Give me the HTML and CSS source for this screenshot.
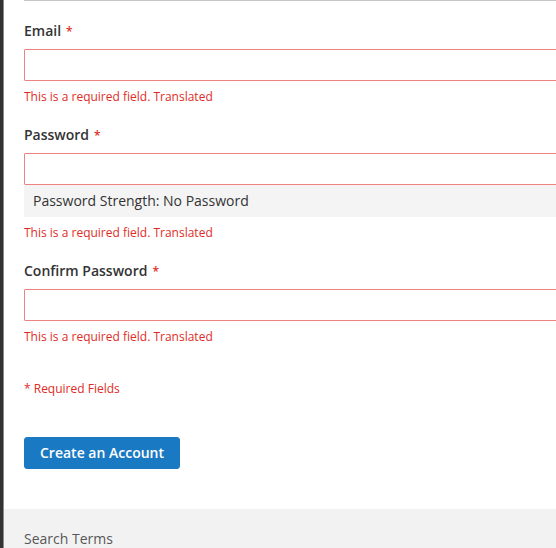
FILE: index.html
```html
<!DOCTYPE html>
<html lang="en">
<head>
<meta charset="utf-8">
<title>Create Account</title>
<link rel="stylesheet" href="styles.css">
</head>
<body>
<div class="page">
  <main class="main">
    <form class="form">
      <fieldset class="fieldset">
        <div class="field">
          <label class="label required">Email</label>
          <input class="input" type="email">
          <div class="error">This is a required field. Translated</div>
        </div>
        <div class="field">
          <label class="label required">Password</label>
          <input class="input" type="password">
          <div class="strength">Password Strength: No Password</div>
          <div class="error">This is a required field. Translated</div>
        </div>
        <div class="field">
          <label class="label required">Confirm Password</label>
          <input class="input" type="password">
          <div class="error">This is a required field. Translated</div>
        </div>
        <div class="note">* Required Fields</div>
      </fieldset>
      <div class="actions">
        <button class="btn" type="button">Create an Account</button>
      </div>
    </form>
  </main>
  <footer class="footer">
    <a class="footer-link">Search Terms</a>
  </footer>
</div>
</body>
</html>
```

FILE: styles.css
```css
html, body {
  margin: 0;
  padding: 0;
  height: 100%;
  overflow: hidden;
  background: #ffffff;
}
body {
  font-family: "Open Sans", "Liberation Sans", sans-serif;
  font-size: 14px;
  line-height: 20px;
  color: #333333;
  border-left: 3px solid #333333;
}
.page {
  border-left: 1px solid #8c8c8c;
  min-height: 100%;
  display: flex;
  flex-direction: column;
}
.main {
  padding: 0 0 0 20px;
}
.form {
  width: 640px;
  border-top: 1px solid #c6c6c6;
  padding-top: 20px;
}
.fieldset {
  border: 0;
  margin: 0 0 40px;
  padding: 0;
  min-width: 0;
}
.field {
  display: flex;
  flex-direction: column;
  margin-bottom: 20px;
}
.label {
  font-weight: 600;
  margin-bottom: 7px;
  line-height: 20px;
}
.label.required::after {
  content: "*";
  color: #e02b27;
  font-size: 12px;
  margin-left: 5px;
}
.input {
  box-sizing: border-box;
  height: 32px;
  width: 100%;
  border: 1px solid #ed8380;
  border-radius: 1px;
  background: #ffffff;
  margin: 0;
  padding: 0 9px;
  font: inherit;
}
.strength {
  background: #f4f4f4;
  height: 32px;
  line-height: 32px;
  padding: 0 9px;
}
.error {
  margin-top: 7px;
  color: #e02b27;
  font-size: 12px;
  line-height: 17px;
}
.note {
  margin-top: 35px;
  color: #e02b27;
  font-size: 12px;
  line-height: 17px;
}
.actions {
  margin-bottom: 40px;
}
.btn {
  background: #1979c3;
  border: 1px solid #1979c3;
  border-radius: 3px;
  color: #ffffff;
  font-family: inherit;
  font-size: 14px;
  font-weight: 600;
  line-height: 16px;
  padding: 7px 15px;
  margin: 0;
}
.footer {
  background: #f2f2f2;
  padding: 20px 20px;
  flex: 1;
}
.footer-link {
  color: #575757;
  font-size: 14px;
  line-height: 20px;
}
```
